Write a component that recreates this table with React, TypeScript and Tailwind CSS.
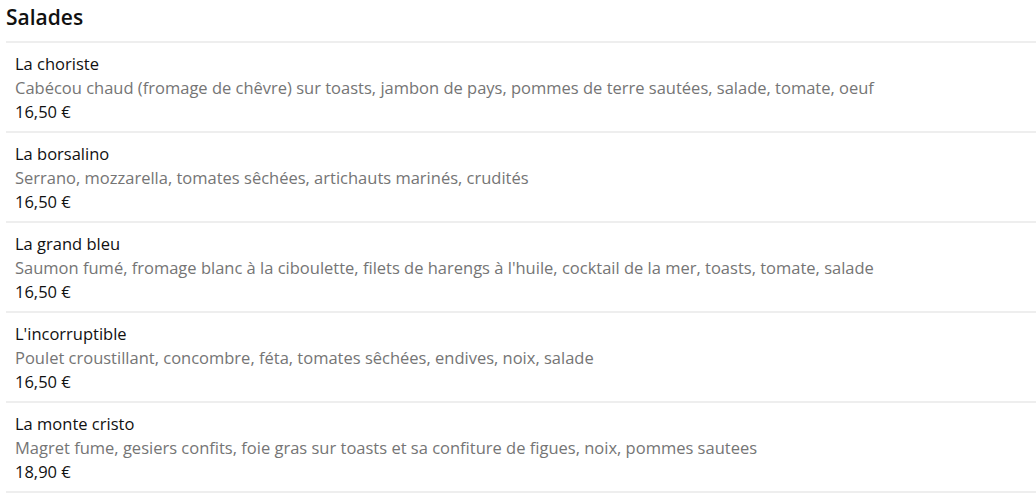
const salades = [
  {
    name: "La choriste",
    desc: "Cabécou chaud (fromage de chêvre) sur toasts, jambon de pays, pommes de terre sautées, salade, tomate, oeuf",
    price: "16,50 €",
  },
  {
    name: "La borsalino",
    desc: "Serrano, mozzarella, tomates sêchées, artichauts marinés, crudités",
    price: "16,50 €",
  },
  {
    name: "La grand bleu",
    desc: "Saumon fumé, fromage blanc à la ciboulette, filets de harengs à l'huile, cocktail de la mer, toasts, tomate, salade",
    price: "16,50 €",
  },
  {
    name: "L'incorruptible",
    desc: "Poulet croustillant, concombre, féta, tomates sêchées, endives, noix, salade",
    price: "16,50 €",
  },
  {
    name: "La monte cristo",
    desc: "Magret fume, gesiers confits, foie gras sur toasts et sa confiture de figues, noix, pommes sautees",
    price: "18,90 €",
  },
];

export default function App() {
  return (
    <div className="min-h-screen bg-white pl-[6px] font-['Open_Sans',sans-serif] text-[#111]">
      <h2 className="pt-[3px] pb-[10px] text-[21px] leading-[28px] font-semibold">Salades</h2>
      <ul>
        {salades.map((s) => (
          <li key={s.name} className="border-t-2 border-[#eeeeee] pt-[9px] pb-[7px] pl-[9px] text-[16.5px] leading-[24px]">
            <div>{s.name}</div>
            <div className="text-[#757575]">{s.desc}</div>
            <div>{s.price}</div>
          </li>
        ))}
        <li className="border-t-2 border-[#eeeeee]" />
      </ul>
    </div>
  );
}
